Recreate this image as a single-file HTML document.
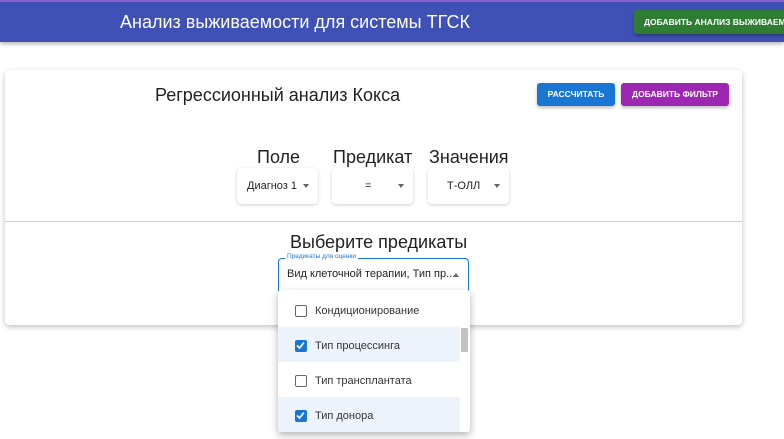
<!DOCTYPE html>
<html><head><meta charset="utf-8"><style>
*{box-sizing:border-box;margin:0;padding:0}
body{width:784px;height:439px;overflow:hidden;background:#fff;font-family:"Liberation Sans",sans-serif;position:relative;color:#222}
.hdr{position:absolute;left:0;top:0;width:784px;height:42px;background:#3f51b5;border-top:2px solid #8a5fd0;box-shadow:0 2px 4px rgba(0,0,0,.3)}
.hdr .t{position:absolute;left:120px;top:10px;color:#fff;font-size:18px}
.gb{position:absolute;left:634px;top:10px;width:160px;height:24px;background:#2e7d32;color:#fff;font-size:8.5px;font-weight:bold;line-height:24px;padding-left:10px;border-radius:3px;box-shadow:0 2px 3px rgba(0,0,0,.3);white-space:nowrap}
.card{position:absolute;left:5px;top:70px;width:737px;height:255px;background:#fff;border-radius:4px;box-shadow:0 2px 6px rgba(0,0,0,.25)}
.ab{position:absolute;font-size:18px;color:#222}
.btn{position:absolute;height:23px;color:#fff;font-size:8.5px;font-weight:bold;text-align:center;line-height:23px;border-radius:3px;box-shadow:0 2px 3px rgba(0,0,0,.25)}
.sel{position:absolute;top:168px;width:81px;height:36px;border-radius:4px;box-shadow:0 1px 3px rgba(0,0,0,.2);font-size:11px;line-height:36px}
.sel i{position:absolute;right:9px;top:16px;border-left:3.5px solid transparent;border-right:3.5px solid transparent;border-top:4px solid #666}
.line{position:absolute;left:5px;top:221px;width:737px;height:1px;background:#ccc}
.out{position:absolute;left:278px;top:258px;width:191px;height:33px;border:1.5px solid #1976d2;border-bottom:none;border-radius:4px 4px 0 0;font-size:11px}
.out .lb{position:absolute;left:6px;top:-6px;background:#fff;padding:0 2px;font-size:6.5px;color:#1976d2}
.dd{position:absolute;left:278px;top:290px;width:192px;height:142px;background:#fff;box-shadow:0 3px 8px rgba(0,0,0,.3);border-radius:3px;overflow:hidden}
.it{position:absolute;left:0;width:182px;height:35px;font-size:11px;line-height:38px;padding-left:37px;color:#333}
.it.s{background:#edf3fb}
.cb{position:absolute;left:17px;top:13px;width:12px;height:12px;border:1.5px solid #666;border-radius:2px}
.it.s .cb{background:#1976d2;border-color:#1976d2}
.cb svg{position:absolute;left:0;top:0}
</style></head><body>
<div class="hdr"><div class="t">Анализ выживаемости для системы ТГСК</div></div>
<div class="gb">ДОБАВИТЬ АНАЛИЗ ВЫЖИВАЕМОСТИ</div>
<div class="card"></div>
<div class="ab" style="left:155px;top:85px">Регрессионный анализ Кокса</div>
<div class="btn" style="left:537px;top:83px;width:78px;background:#1976d2">РАССЧИТАТЬ</div>
<div class="btn" style="left:621px;top:83px;width:108px;background:#9c27b0">ДОБАВИТЬ ФИЛЬТР</div>
<div class="ab" style="left:257px;top:147px">Поле</div>
<div class="ab" style="left:333px;top:147px">Предикат</div>
<div class="ab" style="left:429px;top:147px">Значения</div>
<div class="sel" style="left:237px;padding-left:10px">Диагноз 1<i></i></div>
<div class="sel" style="left:332px;padding-left:33px">=<i></i></div>
<div class="sel" style="left:428px;padding-left:19px">Т-ОЛЛ<i></i></div>
<div class="line"></div>
<div class="ab" style="left:290px;top:232px">Выберите предикаты</div>
<div class="out"><span class="lb">Предикаты для оценки</span><span style="position:absolute;left:8px;top:9px">Вид клеточной терапии, Тип пр...</span><i style="position:absolute;right:9px;top:14px;border-left:3.5px solid transparent;border-right:3.5px solid transparent;border-bottom:4px solid #666"></i></div>
<div class="dd">
<div class="it" style="top:2px"><span class="cb"></span>Кондиционирование</div>
<div class="it s" style="top:37px"><span class="cb"><svg width="9" height="9" viewBox="0 0 9 9"><path d="M1 4.5L3.5 7L8 1.5" stroke="#fff" stroke-width="1.6" fill="none"/></svg></span>Тип процессинга</div>
<div class="it" style="top:72px"><span class="cb"></span>Тип трансплантата</div>
<div class="it s" style="top:107px"><span class="cb"><svg width="9" height="9" viewBox="0 0 9 9"><path d="M1 4.5L3.5 7L8 1.5" stroke="#fff" stroke-width="1.6" fill="none"/></svg></span>Тип донора</div>
<div style="position:absolute;left:183px;top:38px;width:7px;height:24px;background:#c1c1c1"></div>
</div>
</body></html>
